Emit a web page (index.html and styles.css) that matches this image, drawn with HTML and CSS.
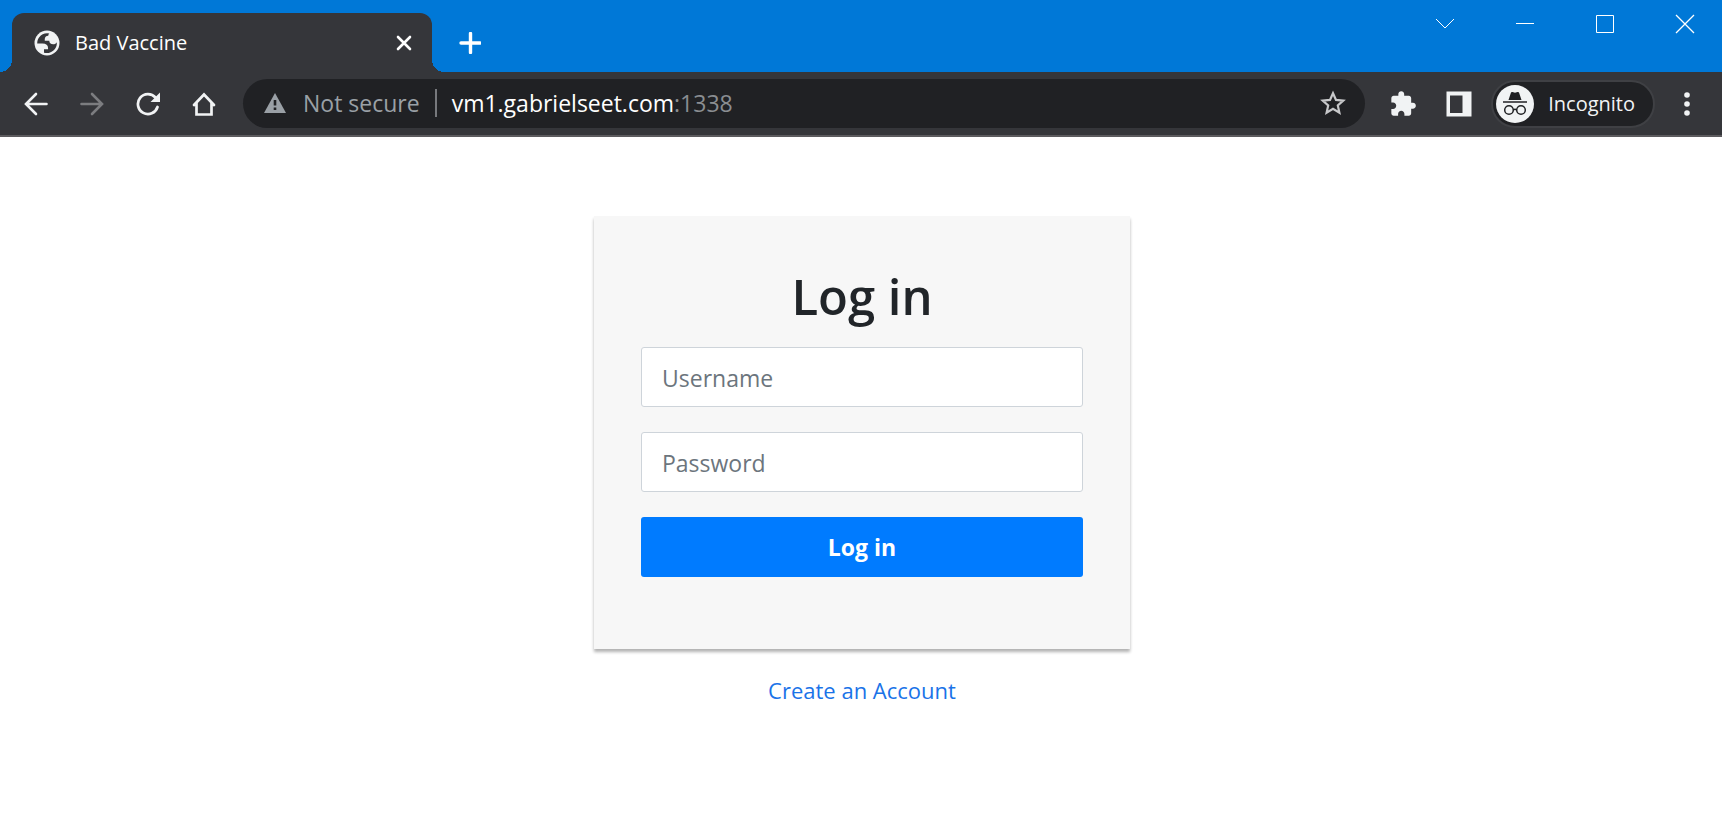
FILE: index.html
```html
<!DOCTYPE html>
<html lang="en">
<head>
<meta charset="utf-8">
<title>Bad Vaccine</title>
<link rel="stylesheet" href="styles.css">
</head>
<body>
<header class="browser">
  <div class="tabstrip">
    <div class="tab">
      <svg class="icon" width="26" height="26" viewBox="0 0 26 26" aria-hidden="true"><circle cx="13" cy="13" r="12.500" fill="#f1f3f4"/><path fill="#35363a" d="M3.200 13.500H8.500C12.500 13.500 14.500 15.400 14 19.200H10V22.700A10 10 0 0 0 22.800 12.200C22 13.600 20.800 14.200 19.200 14.200C16.600 14.200 15.300 13.100 15.300 10.800H10.800C10.400 7.500 11.600 5.800 14.300 5.800C14.300 4.600 14.700 3.900 15.300 3.400A10 10 0 0 0 3.200 13.500Z"/></svg>
      <span class="tab-title">Bad Vaccine</span>
      <button class="icon-button tab-close" type="button" aria-label="Close tab"><svg width="16" height="16" viewBox="0 0 16 16"><path d="M2 2L14 14M14 2L2 14" fill="none" stroke="#fff" stroke-width="2.600" stroke-linecap="round"/></svg></button>
    </div>
    <button class="icon-button new-tab" type="button" aria-label="New tab"><svg width="22" height="22" viewBox="0 0 22 22"><path d="M11.500 1.500V20.500M2 11H21" fill="none" stroke="#fff" stroke-width="3.400" stroke-linecap="round"/></svg></button>
    <div class="window-controls">
      <button class="icon-button window-button" type="button" aria-label="Search tabs"><svg width="20" height="20" viewBox="0 0 20 20"><path d="M1 5L10 14L19 5" fill="none" stroke="#fff"/></svg></button>
      <button class="icon-button window-button" type="button" aria-label="Minimize"><svg width="20" height="20" viewBox="0 0 20 20"><path d="M1 9.500H19" fill="none" stroke="#fff"/></svg></button>
      <button class="icon-button window-button" type="button" aria-label="Maximize"><svg width="20" height="20" viewBox="0 0 20 20"><path d="M1.500 1.500H18.500V18.500H1.500Z" fill="none" stroke="#fff"/></svg></button>
      <button class="icon-button window-button" type="button" aria-label="Close"><svg width="20" height="20" viewBox="0 0 20 20"><path d="M1 1L19 19M19 1L1 19" fill="none" stroke="#fff" stroke-width="1.300"/></svg></button>
    </div>
  </div>
  <div class="toolbar">
    <nav class="nav-buttons">
      <button class="icon-button nav-button" type="button" aria-label="Back"><svg width="24" height="24" viewBox="0 0 24 24"><path d="M22.500 12H2.500M12 2L2 12L12 22" fill="none" stroke="#f1f3f4" stroke-width="2.600" stroke-linecap="round"/></svg></button>
      <button class="icon-button nav-button" type="button" aria-label="Forward"><svg width="24" height="24" viewBox="0 0 24 24"><path d="M1.500 12H21.500M12 2L22 12L12 22" fill="none" stroke="#7c7d80" stroke-width="2.600" stroke-linecap="round"/></svg></button>
      <button class="icon-button nav-button" type="button" aria-label="Reload"><svg width="24" height="24" viewBox="0 0 24 24"><path d="M19.500 5.500A10 10 0 1 0 21.500 15" fill="none" stroke="#f1f3f4" stroke-width="2.700" stroke-linecap="round"/><path d="M24 .5V10H14.500Z" fill="#f1f3f4"/></svg></button>
      <button class="icon-button nav-button" type="button" aria-label="Home"><svg width="24" height="24" viewBox="0 0 24 24"><path d="M2 13L12 2.500L22 13M4.500 11V22.500H19.500V11" fill="none" stroke="#f1f3f4" stroke-width="2.700" stroke-linecap="round"/></svg></button>
    </nav>
    <div class="omnibox">
      <svg class="icon" width="22" height="20" viewBox="0 0 22 20" aria-hidden="true"><path d="M11 0L22 20H0Z" fill="#9aa0a6"/><path d="M11 7V12.500M11 14.500V17" stroke="#202124" stroke-width="2.600"/></svg>
      <span class="security">Not secure</span>
      <span class="divider"></span>
      <span class="address">vm1.gabrielseet.com<span class="port">:1338</span></span>
      <button class="icon-button bookmark" type="button" aria-label="Bookmark this page"><svg width="26" height="26" viewBox="0 0 26 26"><path d="M13 3.200L16 9.900L23.300 10.600L17.800 15.500L19.400 22.700L13 18.900L6.600 22.700L8.200 15.500L2.700 10.600L10 9.900Z" fill="none" stroke="#c7c8ca" stroke-width="2.200"/></svg></button>
    </div>
    <div class="actions">
      <button class="icon-button" type="button" aria-label="Extensions"><svg width="28" height="28" viewBox="0 0 24 24"><path fill="#f1f3f4" d="M20.500 11H19V7c0-1.100-.9-2-2-2h-4V3.500C13 2.120 11.880 1 10.500 1S8 2.120 8 3.500V5H4c-1.100 0-1.990.9-1.990 2v3.800H3.500c1.490 0 2.700 1.210 2.700 2.700s-1.210 2.700-2.700 2.700H2V20c0 1.100.9 2 2 2h3.800v-1.500c0-1.490 1.210-2.700 2.700-2.700s2.700 1.210 2.700 2.700V22H17c1.100 0 2-.9 2-2v-4h1.500c1.380 0 2.500-1.120 2.500-2.500S21.880 11 20.500 11z"/></svg></button>
      <button class="icon-button" type="button" aria-label="Side panel"><svg width="28" height="28" viewBox="0 0 28 28"><path fill="#f1f3f4" fill-rule="evenodd" d="M1.500 1.500H26.500V26.500H1.500ZM5 5.500V23H17.500V5.500Z"/></svg></button>
    </div>
    <button class="profile" type="button">
      <svg class="icon" width="38" height="38" viewBox="0 0 38 38" aria-hidden="true"><circle cx="19" cy="19" r="19" fill="#f1f3f4"/><path d="M12.500 15L15 7.500Q15.500 6.600 16.500 7L19 7.700L21.500 7Q22.600 6.600 23 7.500L25.500 15Z" fill="#202124"/><g fill="none" stroke="#202124" stroke-width="1.500"><path d="M7 17H31"/><circle cx="13" cy="25" r="4.300"/><circle cx="25" cy="25" r="4.300"/><path d="M17.300 25Q19 23.500 20.700 25"/></g></svg>
      <span>Incognito</span>
    </button>
    <button class="icon-button menu" type="button" aria-label="Menu"><svg width="6" height="24" viewBox="0 0 6 24"><g fill="#f1f3f4"><circle cx="3" cy="3" r="2.800"/><circle cx="3" cy="12" r="2.800"/><circle cx="3" cy="21" r="2.800"/></g></svg></button>
  </div>
</header>
<main class="page">
  <form class="card">
    <h1 class="card-title">Log in</h1>
    <input class="field" type="text" placeholder="Username" aria-label="Username">
    <input class="field" type="password" placeholder="Password" aria-label="Password">
    <button class="submit" type="button">Log in</button>
  </form>
  <a class="create-link" href="#">Create an Account</a>
</main>
</body>
</html>
```
FILE: styles.css
```css
* {
  box-sizing: border-box;
}

body {
  margin: 0;
  background: #fff;
  font-family: "Open Sans", "Noto Sans", sans-serif;
}

button {
  font-family: inherit;
  border: 0;
}

svg {
  display: block;
}

.icon {
  flex: none;
}

.icon-button {
  display: flex;
  align-items: center;
  justify-content: center;
  flex: none;
  padding: 0;
  background: none;
}

.tabstrip {
  display: flex;
  height: 72px;
  padding-left: 12px;
  background: #0078d7;
}

.tab {
  position: relative;
  display: flex;
  align-items: center;
  width: 420px;
  height: 59px;
  margin-top: 13px;
  padding: 0 20px 0 22px;
  border-radius: 12px 12px 0 0;
  background: #35363a;
  color: #fff;
}

/* Flared feet where the tab meets the toolbar */
.tab::before,
.tab::after {
  content: "";
  position: absolute;
  bottom: 0;
  width: 12px;
  height: 12px;
}

.tab::before {
  right: 100%;
  background: radial-gradient(circle at 0 0, #0078d7 12px, #35363a 12px);
}

.tab::after {
  left: 100%;
  background: radial-gradient(circle at 100% 0, #0078d7 12px, #35363a 12px);
}

.tab-title {
  flex: 1;
  margin-left: 15px;
  font-size: 20px;
}

.new-tab {
  width: 40px;
  height: 60px;
  margin: 13px 0 0 18px;
}

.window-controls {
  display: flex;
  gap: 40px;
  margin-left: auto;
  padding-right: 17px;
}

.window-button {
  width: 40px;
  height: 48px;
}

.toolbar {
  display: flex;
  align-items: center;
  height: 65px;
  padding: 0 32px 0 24px;
  border-bottom: 2px solid #5c5b5e;
  background: #35363a;
}

.nav-buttons {
  display: flex;
  gap: 32px;
}

.omnibox {
  display: flex;
  flex: 1;
  align-items: center;
  height: 49px;
  margin-left: 27px;
  padding: 0 19px 2px 21px;
  border-radius: 25px;
  background: #202124;
  font-size: 23px;
  line-height: 30px;
}

.security {
  margin-left: 17px;
  color: #9aa0a6;
}

.divider {
  width: 2px;
  height: 28px;
  margin: 0 15px;
  background: #77797d;
}

.address {
  color: #fff;
}

.port {
  color: #8a8d91;
}

.bookmark {
  margin-left: auto;
}

.actions {
  display: flex;
  gap: 28px;
  margin: 0 18px 0 24px;
}

.profile {
  display: flex;
  align-items: center;
  gap: 14px;
  height: 48px;
  padding: 0 18px 0 3px;
  border: 2px solid #3f4044;
  border-radius: 24px;
  background: #202124;
  color: #f1f3f4;
  font-size: 20px;
}

.menu {
  margin-left: 29px;
}

.page {
  display: flex;
  flex-direction: column;
  align-items: center;
  gap: 24px;
  padding: 79px 16px 48px 18px;
}

.card {
  display: flex;
  flex-direction: column;
  gap: 25px;
  width: 100%;
  max-width: 536px;
  padding: 46px 47px 72px;
  background: #f7f7f7;
  box-shadow: 0 3px 3px rgba(0, 0, 0, 0.3);
}

.card-title {
  margin: 0 0 -8px;
  color: #212529;
  font-size: 49px;
  font-weight: 600;
  line-height: 68px;
  text-align: center;
}

.field {
  width: 100%;
  height: 60px;
  padding: 2px 20px 0;
  border: 1px solid #ced4da;
  border-radius: 3px;
  background: #fff;
  color: #495057;
  font-family: inherit;
  font-size: 23px;
}

.field::placeholder {
  color: #6c757d;
  opacity: 1;
}

.submit {
  height: 60px;
  padding: 0;
  border-radius: 3px;
  background: #007bff;
  color: #fff;
  font-size: 23px;
  font-weight: 700;
}

.create-link {
  color: #1a73e8;
  font-size: 22px;
  line-height: 34px;
  text-decoration: none;
}
```
